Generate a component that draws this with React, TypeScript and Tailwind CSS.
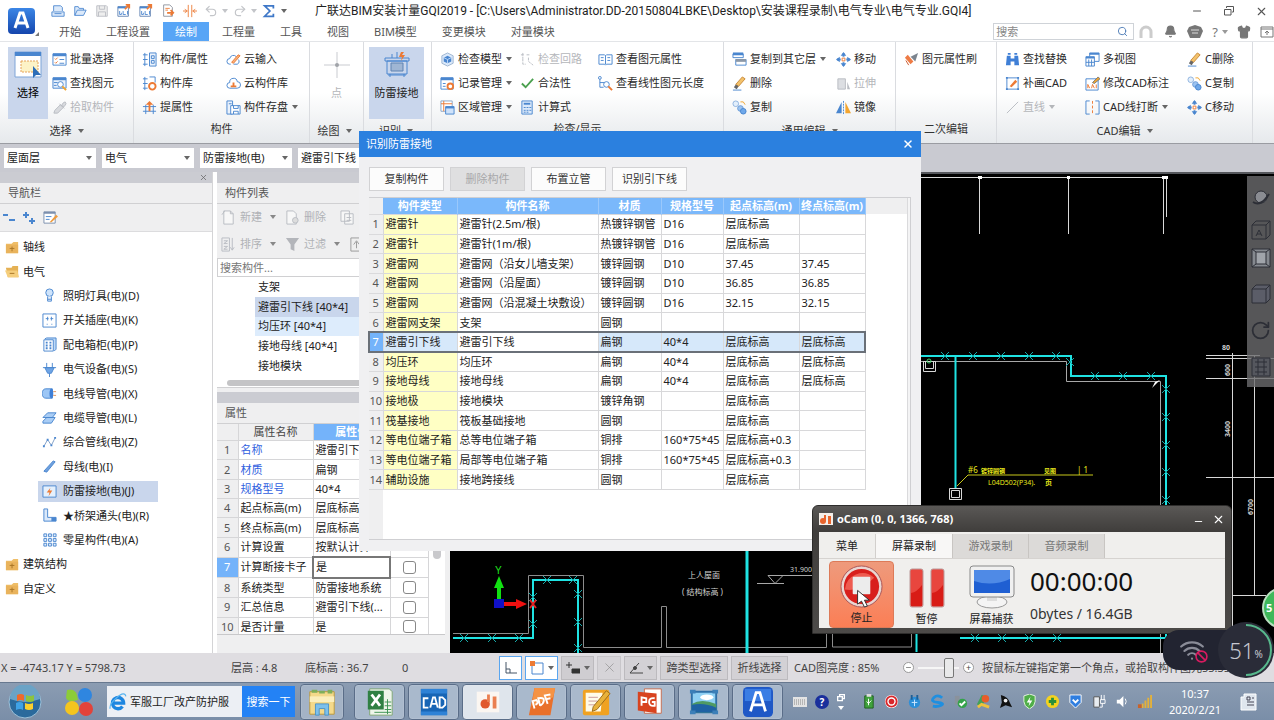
import { type ReactNode } from "react";
import { Bell, Search, Shirt, X, Minus, Undo2, Redo2, RotateCw, Wifi, Ban } from "lucide-react";

const FONT = "font-['Noto_Sans','Noto_Sans_CJK_SC',sans-serif]";

const B = "#4a86cf";
const O = "#ec7a35";
const G = "#b9bcc2";

const icons: Record<string, ReactNode> = {
    save: <><path d="M3 8V2h8l2 2v4M1 9h14v5H1z" stroke={B} fill="#dbe9fa" /><path d="M4 11h8" stroke={B} /></>,
    open: <path d="M2 13V3h4l1 2h5v2M2 13l3-6h10l-3 6z" stroke={B} fill="#dbe9fa" />,
    disk: <><path d="M2 2h11l1 1v11H2z" stroke={G} fill="#eee" /><path d="M5 2v4h6V2M4 14V9h8v5" stroke={G} /></>,
    export: <><path d="M1 3h12v11H1z" stroke="#5c7fb0" fill="#fff" /><path d="M1 4h9" stroke={B} strokeWidth="2" /><path d="M3 8v4h2v-2M7 8v4h3M12 8v4" stroke={B} /><path d="M9 6l5-5m-4 0h4v4" stroke={O} strokeWidth="2" /></>,
    doc: <><path d="M3 1h7l3 3v10H3z" stroke="#8a8f99" fill="#fff" /><path d="M5 5h5M5 7h3" stroke={O} /><path d="M7 10h7m-3-3 3 3-3 3" stroke={O} strokeWidth="2" /></>,
    cmp: <path d="M6 1v14M10 1v14M0 8h4M2 6l3 2-3 2M16 8h-4m2-2-3 2 3 2" stroke={O} />,
    sum: <path d="M13 5V2H3l6 6-6 6h10v-3" stroke="#3f78c8" strokeWidth="2" />,
    listCheck: <><path d="M1 2h14v12H1z" stroke={B} fill="#fff" /><path d="M1 3h14" stroke={B} strokeWidth="3" /><path d="M3 7l1 1 2-2M3 11l1 1 2-2" stroke={O} /><path d="M8 8h5M8 12h5" stroke={B} /></>,
    find: <><path d="M1 2h14v11H1z" stroke={B} fill="#eaf2fc" /><path d="M1 3h14" stroke={B} strokeWidth="3" /><path d="M2 7h4M2 10h3" stroke={B} /><circle cx="9" cy="9" r="3" stroke={B} fill="#fff" /><path d="M11 11l4 4" stroke="#f0a52f" strokeWidth="2" /></>,
    pick: <path d="M2 14l1-3 6-6 3 3-6 6zM8 4l5 5M10 6l2-3 2-1 1 2-2 3z" stroke={G} fill="#d8dade" />,
    attr: <><path d="M1 3h5M1 8h5M1 13h5M3 1v14" stroke={B} /><path d="M8 1h7v14H8z" stroke={B} fill="#eaf2fc" /><path d="M10 4h3v3h-3zM10 9h3v3h-3z" stroke={B} /></>,
    lib: <><path d="M1 3h5M1 8h5M1 13h5M3 1v14M8 1h6v6" stroke={B} /><circle cx="11" cy="11" r="3.5" stroke={O} fill="#fff" strokeWidth="2" /></>,
    lift: <><path d="M1 7h14M4 5v10M12 5v10M1 12h14" stroke={B} /><path d="M8 12V4" stroke={O} strokeWidth="2" /><path d="M4 5l4-4 4 4z" fill={O} /></>,
    cloudPen: <><path d="M5 13H4a3 3 0 010-6 4 4 0 017-2M13 8a3 3 0 01-1 5H8" stroke={B} /><path d="M6 11l7-8 2 1-7 8z" stroke={O} fill="#f6b27c" /></>,
    cloudUp: <><path d="M4 13a3 3 0 010-6 4 4 0 018-1 3.500 3.500 0 010 7z" stroke={B} fill="#fff" /><path d="M5 11h6M8 11V7" stroke={O} strokeWidth="2" /></>,
    copySave: <><path d="M1 1h6v14H1zM3 4h3" stroke={B} fill="#eaf2fc" /><path d="M5 6h10v9H5z" stroke={B} fill="#fff" /><path d="M8 6v3h5V6M8 15v-3h5v3" stroke={B} /></>,
    cube: <><path d="M8 1l6 3v8l-6 3-6-3V4z" stroke="#9db3cf" fill="#dbe9fa" /><path d="M8 4l4 2v4l-4 2-4-2V6z" fill={B} /><path d="M4 6l4 2 4-2M8 8v4" stroke="#bcd6f7" /></>,
    gearDoc: <><path d="M1 2h13v12H1z" stroke={B} fill="#fff" /><path d="M1 3h13" stroke={B} strokeWidth="3" /><path d="M3 8h3M3 11h3" stroke={B} /><circle cx="11" cy="11" r="3" stroke={O} strokeWidth="2" fill="#fff" /></>,
    area: <><path d="M1 1h12v11H1z" stroke="#8aa6c9" fill="#fff" /><path d="M1 4h12M4 1v11" stroke={O} /><path d="M6 7h9v8H6z" stroke={B} fill="#cfe2fa" /><path d="M6 8h9" stroke={B} strokeWidth="2" /></>,
    circuit: <path d="M1 3h4M3 1v6M7 3h4M3 7v6h3M9 6v4l5 4" stroke={G} strokeDasharray="3 1" />,
    check: <path d="M2 8l4 4 8-9" stroke="#4ba04f" strokeWidth="2" />,
    calc: <><path d="M2 1h11v14H2z" stroke={B} fill="#dbe9fa" /><path d="M4 4h7" stroke={B} strokeWidth="2" /><path d="M4 8h2M7 8h2M10 8h2M4 11h2M7 11h2M10 11h2M4 13h2M7 13h2" stroke={B} /></>,
    book: <><path d="M1 3h6l1 1 1-1h6v10H9l-1 1-1-1H1z" stroke={B} fill="#fff" /><path d="M8 4v9M3 6h3M3 9h3M10 6h3M10 9h3" stroke={B} /></>,
    lineFind: <><path d="M2 2v10h4M2 7h6" stroke={B} /><circle cx="2" cy="2" r="1.500" fill="#fff" stroke={B} /><circle cx="9" cy="9" r="3" stroke={B} fill="#fff" /><path d="M11 11l4 4" stroke={O} strokeWidth="2" /></>,
    layers: <><path d="M1 2h11v4H1zM4 8h11v6H4z" stroke={B} fill="#fff" /><path d="M1 2h11" stroke={B} strokeWidth="3" /><path d="M4 9h11" stroke="#8b98a8" strokeWidth="3" /></>,
    eraser: <><path d="M4 9l7-8 3 2-7 8z" stroke="#c98a3a" fill="#f3c26b" /><path d="M2 12l2-3 3 2-2 3z" fill="#666" /><path d="M1 15h9" stroke={B} /></>,
    copy: <><circle cx="4" cy="4" r="3" stroke="#8fb3df" fill="#e3effc" /><path d="M9 2h3l2 3" stroke="#f0a52f" /><circle cx="9" cy="9" r="3" fill="#9cc3f1" stroke="#6a9bd6" /><circle cx="12" cy="12" r="3" fill="#6fa8ea" stroke={B} /></>,
    move: <><path d="M8 1v4M8 15v-4M1 8h4M15 8h-4" stroke={B} strokeWidth="2" /><path d="M8 0L5 4h6zM8 16l-3-4h6zM0 8l4-3v6zM16 8l-4-3v6z" fill={B} /><path d="M6.500 6.500h3v3h-3z" stroke={O} fill="#fff" /></>,
    stretch: <><path d="M2 3h8v11H2z" stroke={G} fill="#dcdee2" /><path d="M12 6l3 8h-3z" fill={G} /></>,
    mirror: <><path d="M6 2v12H0z" fill={B} /><path d="M8 1v14" stroke={B} strokeDasharray="2 1" /><path d="M10 2v12h6z" fill="#f3a52f" /></>,
    brush: <><path d="M1 6l6 7 3-3-6-7z" fill="#ee7b45" /><path d="M7 5l5 5 3-9z" fill="#7b848f" /><path d="M2 9l3 5" stroke="#c9562a" /></>,
    binoc: <path d="M2 4h4v3h4V4h4l1 10h-5v-4H6v4H1zM3 1h3v2H3zM10 1h3v2h-3z" fill="#3f7fd6" />,
    drawCad: <><path d="M2 2h12v12H2z" stroke={B} fill="#fff" /><path d="M1 1h2v2H1zM13 1h2v2h-2zM1 13h2v2H1zM13 13h2v2h-2z" fill={B} /><path d="M5 11l6-7 2 2-6 6z" fill={O} /></>,
    line: <path d="M2 14L14 2" stroke={G} />,
    views: <><path d="M5 1h10v9H5z" stroke={B} fill="#fff" /><path d="M1 5h9v10H1z" stroke={B} fill="#fff" /><path d="M1 6h9M5 2h10" stroke={B} strokeWidth="2" /><path d="M4 8v7M7 8v7M1 11h9" stroke={B} /></>,
    editCad: <><path d="M1 3h13v12H1z" stroke={B} fill="#fff" /><path d="M3 13V9l2 4m2 0l1-4 2 4m2-4v4" stroke={O} /><path d="M8 7l6-6 2 2-6 5z" fill="#f0a52f" stroke="#777" /></>,
    cut: <><path d="M5 1H1v14h4M11 1h4v14h-4" stroke={B} /><path d="M8 1v14" stroke={O} strokeDasharray="3 2" /></>,
    bulb: <><circle cx="8" cy="5" r="4" stroke={B} fill="#cfe4fb" /><path d="M6 9v5h4V9M6 12h4" stroke={B} fill="#eaf2fc" /></>,
    socket: <><path d="M1 1h14v14H1z" stroke={B} fill="#fff" /><path d="M4 6h3M9 6h3M6 4v4M10 4v4M5 12h1M10 12h1" stroke={B} /></>,
    box: <><path d="M3 2l2-1h10v12l-2 2" stroke={B} fill="#bcd8f7" /><path d="M2 3h10v12H2z" stroke={B} fill="#fff" /><path d="M4 6h2M8 6h2M4 9h2M8 9h2M4 12h2M8 12h2" stroke={B} strokeWidth="2" /></>,
    plug: <><path d="M3 6h10l-3 6H6z" fill="#6fa4e4" stroke={B} /><path d="M5 1v5M11 1v5M8 12v4M1 6h14" stroke={B} /></>,
    pipe: <><path d="M4 3h7v10H4a4 5 0 010-10z" fill="#9cc6f5" stroke={B} /><ellipse cx="10" cy="8" rx="2" ry="5" fill="#3f7fd6" /><path d="M12 6h3M12 10h3" stroke="#e0925a" /></>,
    cable: <><path d="M1 8l5-5h9l-4 5zM1 12l4-4h9l-4 6H1z" fill="#a9cdf5" stroke={B} /></>,
    poly: <><path d="M2 12l4-7 4 6 4-8" stroke="#7c9cc5" /><path d="M1 11h2v2H1zM5 4h2v2H5zM9 10h2v2H9zM13 2h2v2h-2z" fill={B} /></>,
    bar: <path d="M2 13L12 2l2 1L5 14z" fill="#6fa0de" stroke={B} />,
    bolt: <><path d="M1 2h14v12H1z" stroke={B} fill="#e4f0fd" /><path d="M9 4L5 9h3l-1 4 4-6H8z" fill={O} /></>,
    elbow: <><path d="M2 1h4v9h9v4H2z" fill="#dbe9fa" stroke={B} /><path d="M10 10h5v4h-5z" fill={B} /></>,
    dots: <path d="M2 2h3v3H2zM7 2h3v3H7zM12 2h3v3h-3zM2 7h3v3H2zM7 7h3v3H7zM12 7h3v3h-3zM2 12h3v3H2zM7 12h3v3H7zM12 12h3v3h-3z" stroke={B} fill="#e4f0fd" />,
    folder: <><path d="M1 4h6l2-2h5v12H1z" fill="#efbe68" /><path d="M1 5h13v9H1z" fill="#e9b35c" /><path d="M5 9h5M7.500 7v5" stroke="#a87426" /></>,
    folderOpen: <><path d="M1 4h6l1-2h6v12H3z" fill="#e5b154" /><path d="M0 7h13l2 7H3z" fill="#f5ce7c" /><path d="M5 10h5" stroke="#a87426" /></>,
    page: <path d="M3 1h7l3 3v11H3zM10 1v3h3M1 5l3-4" stroke={G} fill="#f7f7f7" />,
    pageDel: <><path d="M2 1h7l3 3v11H2z" stroke={G} fill="#f7f7f7" /><circle cx="11" cy="11" r="3" stroke={G} fill="#ddd" /></>,
    pages: <path d="M1 1h9v11H1zM5 4h9v11H5zM7 8h5M7 11h5" stroke={G} fill="#f7f7f7" />,
    sort: <path d="M1 1h8v14H1zM3 4h4l-4 3h4M3 10h4l-4 3h4M12 1v13m-2-3 2 3 2-3" stroke={G} fill="none" />,
    funnel: <path d="M1 1h14l-5 7v7l-4-2V8z" fill="#b3b5ba" />,
    up: <path d="M2 1h12v14H2zM8 12V5m-3 3 3-4 3 4" stroke="#999" fill="#eee" />,
    edit: <><path d="M1 2h12v12H1z" stroke="#7b8fae" fill="#fff" /><path d="M1 3h12" stroke="#7b8fae" strokeWidth="2" /><path d="M3 7h6M3 10h4" stroke={B} /><path d="M7 13l7-8 2 2-7 6z" fill="#ef9b3c" /></>,
};

function Icon({ name, className = "size-4" }: { name: string; className?: string }) {
    return <svg viewBox="0 0 16 16" fill="none" className={`${className} shrink-0`} aria-hidden="true">{icons[name]}</svg>;
}

function Caret({ className = "text-[#666]" }: { className?: string }) {
    return <svg viewBox="0 0 6 4" className={`h-1 w-[6px] shrink-0 ${className}`} aria-hidden="true"><path d="M0 0h6L3 4z" fill="currentColor" /></svg>;
}

function RibbonItem({ icon, label, caret, off }: { icon: string; label: string; caret?: boolean; off?: boolean }) {
    return <button disabled={off} className={`flex h-6 items-center gap-[3px] whitespace-nowrap ${off ? "text-[#b4b6ba]" : "text-[#2a2a2a]"}`}>
        <Icon name={icon} className="size-[15px]" />
        <span>{label}</span>
        {caret && <span className="ml-px"><Caret className={off ? "text-[#b4b6ba]" : "text-[#666]"} /></span>}
    </button>;
}

function Group({ label, caret, className, children }: { label: string; caret?: boolean; className: string; children: ReactNode }) {
    return <div className={`flex shrink-0 flex-col border-r border-[#dadce0] pt-[5px] ${className}`}>
        <div className="flex h-[72px]">{children}</div>
        <div className={`flex items-center justify-center gap-[6px] pr-2 text-[#333] ${caret ? "h-6" : "h-5"}`}>
            {label}
            {caret && <Caret />}
        </div>
    </div>;
}

function TitleBar() {
    const quick = ["save", "open", "disk", "export", "export", "doc", "cmp"];
    const tabs = ["开始", "工程设置", "绘制", "工程量", "工具", "视图", "BIM模型", "变更模块", "对量模块"];

    return <header className="flex h-[42px] shrink-0 border-b border-[#e3e5e8] bg-white">
        <div className="flex w-[47px] shrink-0 items-center pl-2">
            <svg viewBox="0 0 32 30" className="h-[30px] w-8" aria-label="GQI">
                <defs><linearGradient id="logo" x1="0" y1="0" x2="0" y2="1"><stop stopColor="#3b86e6" /><stop offset="1" stopColor="#1546ad" /></linearGradient></defs>
                <rect x="0" y="2" width="27" height="26" rx="4" fill="url(#logo)" />
                <path d="M7 22L12 7h3l5 15M9 17h9" stroke="#fff" strokeWidth="3" fill="none" />
                <path d="M31 26v4h-4z" fill="#777" />
            </svg>
        </div>
        <div className="flex min-w-0 flex-1 flex-col">
            <div className="flex h-[22px] items-center">
                <div className="flex items-center gap-[5px] pl-[3px]">
                    {quick.map((q, i) => <button key={i} className="flex pr-px" aria-label={q}><Icon name={q} className="h-[14px] w-4" /></button>)}
                    <button aria-label="undo" className="flex items-center gap-1 text-[#c3c5c9]"><Undo2 size={14} /><Caret className="text-[#c3c5c9]" /></button>
                    <button aria-label="redo" className="flex items-center gap-1 text-[#c3c5c9]"><Redo2 size={14} /><Caret className="text-[#c3c5c9]" /></button>
                    <button className="flex" aria-label="sum"><Icon name="sum" className="size-[14px]" /></button>
                    <Caret />
                </div>
                <h1 className="flex-1 truncate pl-7 font-['Roboto','Noto_Sans_CJK_SC',sans-serif] text-[12px] leading-4 text-[#222]">广联达BIM安装计量GQI2019 - [C:\Users\Administrator.DD-20150804LBKE\Desktop\安装课程录制\电气专业\电气专业.GQI4]</h1>
                <div className="flex items-center gap-5 pr-[6px] text-[#555]">
                    <button aria-label="minimize"><Minus size={12} /></button>
                    <button aria-label="restore"><svg viewBox="0 0 12 12" className="size-3" fill="none" stroke="currentColor"><path d="M3.500 3V1.500h7V7H9M1.500 4.500H8V10H1.500z" /></svg></button>
                    <button aria-label="close"><X size={13} /></button>
                </div>
            </div>
            <div className="flex h-[19px] items-center">
                <nav className="flex flex-1 gap-px">
                    {tabs.map((t) => <button key={t} className={t === "绘制" ? "h-[19px] bg-[#58a5f6] px-3 text-white" : "h-[19px] px-3 text-[#555]"}>{t}</button>)}
                </nav>
                <label className="flex h-[17px] w-[141px] items-center border border-[#cfd3d8] px-[2px]">
                    <input placeholder="搜索" aria-label="搜索" className="w-full min-w-0 flex-1 outline-none placeholder:text-[#888]" />
                    <Search size={11} className="mr-[3px] text-[#4a7ab5]" />
                </label>
                <div className="flex items-center gap-[9px] pl-1 text-[#777]">
                    <svg viewBox="0 0 16 16" className="size-4" fill="none" stroke="#ccc" strokeWidth="3"><path d="M3 14V8a5 5 0 0110 0v6" /></svg>
                    <Bell size={13} fill="currentColor" className="mx-px" />
                    <svg viewBox="0 0 16 16" className="size-4" fill="#777"><path d="M8 1l6 2 2 4-3 7H3L0 7l2-4z" /><path d="M4 6h8M5 9h6" stroke="#ddd" /></svg>
                    <span className="flex items-center gap-1 text-[13px]">?<Caret className="text-[#999]" /></span>
                    <Shirt size={14} fill="currentColor" />
                    <svg viewBox="0 0 14 14" className="size-[14px]" fill="none" stroke="#777"><path d="M1 2h12v10H1zM1 4h12M7 10V6M5 8l2-2 2 2" /></svg>
                </div>
            </div>
        </div>
    </header>;
}

function Ribbon() {
    return <div className="flex h-[102px] shrink-0 border-b border-[#9a9ca2] bg-gradient-to-b from-white from-50% to-[#e6e9ec]">
        <Group label="选择" caret className="w-[134px] pl-2">
            <button className="flex w-10 flex-col items-center gap-[6px] bg-[#c9d6ec] pt-1">
                <svg viewBox="0 0 28 28" className="size-7" fill="none"><path d="M1 1h26v25H1z" fill="#fff" stroke="#7ea5d8" /><path d="M1 1h26v4H1z" fill={B} /><path d="M7 10h17v11H7z" fill="#fdf3c7" stroke="#e6a35a" strokeDasharray="2 1" /><path d="M19 15v12l3-3h5z" fill="#2f6fb8" /></svg>
                选择
            </button>
            <div className="pl-1">
                <RibbonItem icon="listCheck" label="批量选择" />
                <RibbonItem icon="find" label="查找图元" />
                <RibbonItem icon="pick" label="拾取构件" off />
            </div>
        </Group>
        <Group label="构件" className="w-[176px] pl-2">
            <div className="w-[84px]">
                <RibbonItem icon="attr" label="构件/属性" />
                <RibbonItem icon="lib" label="构件库" />
                <RibbonItem icon="lift" label="提属性" />
            </div>
            <div>
                <RibbonItem icon="cloudPen" label="云输入" />
                <RibbonItem icon="cloudUp" label="云构件库" />
                <RibbonItem icon="copySave" label="构件存盘" caret />
            </div>
        </Group>
        <Group label="绘图" caret className="w-[54px] pl-1">
            <button disabled className="flex w-full flex-col items-center gap-[6px] pt-1 pr-1 text-[#b4b6ba]">
                <svg viewBox="0 0 28 28" className="size-7"><path d="M14 1v26M1 14h26" stroke="#c9cbd0" /><circle cx="14" cy="14" r="2" fill="#a0a3a8" /></svg>
                点
            </button>
        </Group>
        <Group label="识别" caret className="w-[68px] pl-[5px]">
            <button className="flex w-[55px] flex-col items-center gap-[6px] bg-[#c9d6ec] pt-1 text-[#222]">
                <svg viewBox="0 0 28 28" className="size-7" fill="none"><path d="M2 7h24v3H2zM4 10h20v13H4zM7 23v3M21 23v3M9 7V3M14 7V1M5 24h18" stroke={B} /><path d="M8 12h12v8H8z" fill="#9fb6d4" stroke="#5f83b2" /><path d="M18 1l-2 5h3l-1 4 4-6h-3l2-3z" fill={O} /></svg>
                防雷接地
            </button>
        </Group>
        <Group label="检查/显示" className="w-[292px] pl-2">
            <div className="w-20">
                <RibbonItem icon="cube" label="检查模型" caret />
                <RibbonItem icon="gearDoc" label="记录管理" caret />
                <RibbonItem icon="area" label="区域管理" caret />
            </div>
            <div className="w-[78px]">
                <RibbonItem icon="circuit" label="检查回路" off />
                <RibbonItem icon="check" label="合法性" />
                <RibbonItem icon="calc" label="计算式" />
            </div>
            <div>
                <RibbonItem icon="book" label="查看图元属性" />
                <RibbonItem icon="lineFind" label="查看线性图元长度" />
            </div>
        </Group>
        <Group label="通用编辑" caret className="w-[172px] pl-2">
            <div className="w-[104px]">
                <RibbonItem icon="layers" label="复制到其它层" caret />
                <RibbonItem icon="eraser" label="删除" />
                <RibbonItem icon="copy" label="复制" />
            </div>
            <div>
                <RibbonItem icon="move" label="移动" />
                <RibbonItem icon="stretch" label="拉伸" off />
                <RibbonItem icon="mirror" label="镜像" />
            </div>
        </Group>
        <Group label="二次编辑" className="w-[101px] pl-2">
            <RibbonItem icon="brush" label="图元属性刷" />
        </Group>
        <Group label="CAD编辑" caret className="w-[256px] pl-2">
            <div className="w-20">
                <RibbonItem icon="binoc" label="查找替换" />
                <RibbonItem icon="drawCad" label="补画CAD" />
                <RibbonItem icon="line" label="直线" caret off />
            </div>
            <div className="w-[102px]">
                <RibbonItem icon="views" label="多视图" />
                <RibbonItem icon="editCad" label="修改CAD标注" />
                <RibbonItem icon="cut" label="CAD线打断" caret />
            </div>
            <div>
                <RibbonItem icon="eraser" label="C删除" />
                <RibbonItem icon="copy" label="C复制" />
                <RibbonItem icon="move" label="C移动" />
            </div>
        </Group>
    </div>;
}

function ContextBar() {
    const picks = ["屋面层", "电气", "防雷接地(电)", "避雷引下线"];

    return <div className="flex h-7 shrink-0 items-center gap-[6px] bg-[#c9cad1] px-1">
        {picks.map((p) => <label key={p} className="relative flex w-[92px] items-center">
            <select aria-label={p} className="h-5 w-full appearance-none bg-white px-[3px] text-[#222]">
                <option>{p}</option>
            </select>
            <span className="pointer-events-none absolute right-1"><Caret /></span>
        </label>)}
    </div>;
}

function PanelTitle({ children, close }: { children: ReactNode; close?: boolean }) {
    return <>
        <div className="flex h-[11px] shrink-0 items-center justify-end bg-[#cbccd2] pr-1 text-[#666]">
            {close && <button aria-label="关闭"><X size={9} /></button>}
        </div>
        <h2 className="flex h-[21px] shrink-0 items-center border-b border-[#d0d0d2] bg-[#efeff0] pl-2 text-[#555]">{children}</h2>
    </>;
}

const navItems = [
    ["bulb", "照明灯具(电)(D)"],
    ["socket", "开关插座(电)(K)"],
    ["box", "配电箱柜(电)(P)"],
    ["plug", "电气设备(电)(S)"],
    ["pipe", "电线导管(电)(X)"],
    ["cable", "电缆导管(电)(L)"],
    ["poly", "综合管线(电)(Z)"],
    ["bar", "母线(电)(I)"],
    ["bolt", "防雷接地(电)(J)"],
    ["elbow", "★桥架通头(电)(R)"],
    ["dots", "零星构件(电)(A)"],
];

function FolderRow({ open, label }: { open?: boolean; label: string }) {
    return <li className="flex items-center pl-[5px]">
        <button className="flex items-center gap-[3px]"><Icon name={open ? "folderOpen" : "folder"} className="size-[15px]" />{label}</button>
    </li>;
}

function Navigator() {
    return <aside className="flex w-[213px] shrink-0 flex-col border-r border-[#d4d4d6] bg-white">
        <PanelTitle close>导航栏</PanelTitle>
        <div className="flex h-[28px] shrink-0 items-center gap-2 border-b border-[#dcdcde] bg-[#efeff0] pl-[3px]">
            <svg viewBox="0 0 12 12" className="size-3" stroke={B} strokeWidth="2"><path d="M0 3h5M6 8h6" /></svg>
            <svg viewBox="0 0 12 12" className="size-3" stroke={B} strokeWidth="2"><path d="M0 3h6M3 0v6M6 9h6M9 6v6" /></svg>
            <Icon name="edit" className="size-[15px]" />
        </div>
        <ul className="mt-[3px] grid h-[366px] auto-rows-fr text-[#222]">
            <FolderRow label="轴线" />
            <FolderRow label="电气" open />
            {navItems.map(([icon, label]) => <li key={label} className="flex items-center pl-[38px]">
                <button className={`flex h-[21px] w-[120px] items-center gap-[6px] pl-1 ${icon === "bolt" ? "bg-[#c9d6ec]" : ""}`}>
                    <Icon name={icon} className="size-[15px]" />{label}
                </button>
            </li>)}
            <FolderRow label="建筑结构" />
            <FolderRow label="自定义" />
        </ul>
    </aside>;
}

function ToolText({ icon, label, caret }: { icon: string; label: string; caret?: boolean }) {
    return <button disabled className={`flex shrink-0 items-center gap-1 text-[#b0b2b6] ${caret ? "w-16" : "w-[55px]"}`}>
        <Icon name={icon} className="size-[15px]" />{label}
        {caret && <span className="ml-1"><Caret className="text-[#888]" /></span>}
    </button>;
}

const props = [
    ["名称", "避雷引下线"],
    ["材质", "扁钢"],
    ["规格型号", "40*4"],
    ["起点标高(m)", "层底标高"],
    ["终点标高(m)", "层底标高"],
    ["计算设置", "按默认计算..."],
    ["计算断接卡子", "是"],
    ["系统类型", "防雷接地系统"],
    ["汇总信息", "避雷引下线(..."],
    ["是否计量", "是"],
];

function ComponentPanel() {
    const list = ["支架", "避雷引下线 [40*4]", "均压环 [40*4]", "接地母线 [40*4]", "接地模块"];

    return <aside className="ml-1 flex w-[233px] shrink-0 flex-col bg-[#efeff0]">
        <PanelTitle>构件列表</PanelTitle>
        <div className="flex h-[26px] shrink-0 items-center pl-1">
            <ToolText icon="page" label="新建" caret />
            <ToolText icon="pageDel" label="删除" />
            <Icon name="pages" className="size-[15px]" />
        </div>
        <div className="flex h-7 shrink-0 items-center pl-1">
            <ToolText icon="sort" label="排序" caret />
            <ToolText icon="funnel" label="过滤" caret />
            <Icon name="up" className="size-[15px]" />
        </div>
        <input placeholder="搜索构件..." aria-label="搜索构件" className="h-[19px] w-[228px] shrink-0 border border-[#d0d0d2] bg-white px-[2px] outline-none placeholder:text-[#777]" />
        <div className="flex h-[111px] w-[228px] shrink-0 flex-col border-b border-[#d0d0d2] bg-white">
            <ul className="grid h-[99px] auto-rows-fr pl-[38px] text-[#222]">
                {list.map((l, i) => <li key={l} className={`flex items-center pl-[3px] ${i === 1 ? "bg-[#c9d6ec]" : i === 2 ? "bg-[#ddecfc]" : ""}`}>{l}</li>)}
            </ul>
            <div className="mt-1 ml-[10px] h-[6px] rounded-full bg-[#c4c4c6]" />
        </div>
        <div className="mt-1 flex w-[228px] shrink-0 flex-col">
            <PanelTitle>属性</PanelTitle>
            <div className="flex h-[211px] overflow-hidden border-b border-[#c8c8ca] bg-white">
                <table className="h-[213px] w-[212px] shrink-0 table-fixed border-collapse text-[#222]">
                    <colgroup><col className="w-[21px]" /><col className="w-[75px]" /><col className="w-[77px]" /><col /></colgroup>
                    <thead>
                        <tr className="h-4 bg-[#efeff0] font-normal leading-4 text-[#444]">
                            <th className="border-r border-[#d6d6d8]"></th>
                            <th className="border-r border-[#d6d6d8] font-normal">属性名称</th>
                            <th className="bg-[#74b3fa] font-bold text-white">属性值</th>
                            <th></th>
                        </tr>
                    </thead>
                    <tbody>
                        {props.map(([k, v], i) => <tr key={k} className="leading-4">
                            <td className={`border border-l-0 border-[#d6d6d8] text-center ${i === 6 ? "bg-[#74b3fa] text-white" : "bg-[#efeff0] text-[#555]"}`}>{i + 1}</td>
                            <td className={`border border-[#d6d6d8] pl-[2px] whitespace-nowrap ${i < 3 ? "text-[#2f5fe0]" : ""}`}>{k}</td>
                            <td className={`pl-[2px] whitespace-nowrap ${i === 6 ? "border-2 border-[#777]" : "border border-[#d6d6d8]"}`}>{v}</td>
                            <td className="border border-[#d6d6d8] align-middle">
                                {i !== 5 && <input type="checkbox" aria-label={k} className="mx-auto block size-[13px] appearance-none rounded-[3px] border border-[#888] bg-white" />}
                            </td>
                        </tr>)}
                    </tbody>
                </table>
                <div className="mx-1 mt-[90px] h-[45px] w-2 rounded-full bg-[#c9c9cc]" />
            </div>
        </div>
    </aside>;
}

const crosses = [
    [945, 356], [973, 356], [1001, 356], [1029, 356], [1056, 356], [1070, 362],
    [1095, 376], [1123, 376], [1151, 376],
    [1166, 389], [1166, 417], [1166, 445], [1166, 472], [1166, 500],
    [464, 638], [492, 638], [519, 638], [533, 597], [533, 624], [547, 580], [573, 580], [578, 594], [578, 622], [578, 648],
    [975, 638], [1002, 638], [1029, 638], [1057, 638],
];

function Drawing() {
    return <main className="relative min-w-0 flex-1 overflow-hidden border-t-2 border-[#55575c] bg-black">
        <svg viewBox="450 174 824 479" preserveAspectRatio="xMinYMin slice" className="size-full" fill="none">
            <g stroke="#d8d8d8">
                <path d="M451 177.500h717M979.500 177v57M1068.500 177v57M1163.500 177v57M1166.500 177v40" />
                <path d="M921 361.500h145.500v20h94v280" stroke="#a8a8a8" />
                <path d="M1206 355.500h54M1206 358.500h68M1206 378.500h68M1206 477.500h68M1232.500 353v280M1254.500 356v239M1232 595.500h34" />
                <path d="M453 633.500h75.500v-58h55v72h78v-41h5v41h160v-60M832.500 600v47h79v-40" stroke="#8c8c8c" />
                <path d="M757 583.500h27M768 575.500h44M768 575.500l7 8 8-8" stroke="#a8a8a8" />
                <path d="M923.500 361.500h12v10h-12zM925.500 361.500v7h8v-7M949.500 488.500h12v11h-12zM951.500 490.500h8v7h-8z" />
            </g>
            <path d="M978 176h4v3h-4zM1067 176h3v3h-3zM1162 176h6v3h-6zM1152 388l3-6 5-2z" fill="#fff" />
            <g stroke="#1fe3e3" strokeWidth="2">
                <path d="M921 356h150v20h95v262H960M955.500 356v132M453 638h80v-58h45v73M916.500 630v22" />
                <path d="M747 540v113" strokeWidth="3" />
            </g>
            <g stroke="#17a9a9">
                {crosses.map(([x, y]) => <path key={`${x}-${y}`} d={`M${x - 4} ${y - 4}l8 8m0-8l-8 8`} />)}
            </g>
            <circle cx="929" cy="361" r="2" stroke="#3fd06a" />
            <path d="M957 486l11-11h125" stroke="#c8c81a" />
            <g fill="#e8e81c" fontSize="8" fontFamily="Noto Sans, Noto Sans CJK SC, sans-serif">
                <text x="968" y="473">#6</text>
                <text x="981" y="473" fontSize="6" fontWeight="bold">镀锌圆钢</text>
                <text x="1044" y="473" fontSize="6" fontWeight="bold">见图</text>
                <text x="1077" y="473">| 1</text>
                <text x="988" y="485" fontSize="7">L04D502(P34).</text>
                <text x="1045" y="485" fontSize="7" fontWeight="bold">页</text>
            </g>
            <g fill="#d0d0d0" fontFamily="Noto Sans, Noto Sans CJK SC, sans-serif">
                <text x="688" y="578" fontSize="8">上人屋面</text>
                <text x="682" y="595" fontSize="8">( 结构标高 )</text>
                <text x="790" y="572" fontSize="7">31.900</text>
                <text x="1230" y="437" fontSize="7" fontWeight="bold" transform="rotate(-90 1230 437)">3400</text>
                <text x="1230" y="376" fontSize="7" fontWeight="bold" transform="rotate(-90 1230 376)">600</text>
                <text x="1222" y="350" fontSize="7" fontWeight="bold">80</text>
                <text x="1253" y="515" fontSize="7" fontWeight="bold" transform="rotate(-90 1253 515)">6700</text>
            </g>
            <text x="495" y="574" fontSize="10" fill="#1fe01f" fontFamily="Liberation Sans">Y</text>
            <path d="M499 602v-16" stroke="#12e012" strokeWidth="4" />
            <path d="M494 588l5-12 5 12z" fill="#12e012" />
            <path d="M504 604h14" stroke="#f01010" strokeWidth="4" />
            <path d="M516 599l11 5-11 5z" fill="#f01010" />
            <path d="M530 600l6 8m0-8l-6 8" stroke="#e02020" strokeWidth="2" />
            <path d="M494 599h10v9h-10z" fill="#1010c8" />
        </svg>
        <div className="absolute top-[2px] right-0 flex h-[211px] w-[27px] flex-col items-center gap-3 bg-[#6b6b6e]/80 pt-3 text-[#2c2e36]">
            <svg viewBox="0 0 20 20" className="size-5" fill="none" stroke="currentColor"><circle cx="10" cy="9" r="6" fill="#8a8c92" /><path d="M2 14q8 5 16-8" strokeWidth="2" /></svg>
            <svg viewBox="0 0 20 20" className="size-5" fill="none" stroke="currentColor"><path d="M1 5h14v14H1zM1 5l4-4h14v14l-4 4M15 5l4-4" /><path d="M5 16l3-6 3 6M6 14h4" /></svg>
            <svg viewBox="0 0 20 20" className="-mt-1 size-5" fill="none" stroke="currentColor"><path d="M1 1h18v18H1z" fill="#85898f" /><path d="M5 4h10v12H5zM1 1l4 3M19 1l-4 3M1 19l4-3M19 19l-4-3" fill="#a0a4aa" /></svg>
            <svg viewBox="0 0 20 20" className="mt-1 size-5" fill="none" stroke="currentColor"><path d="M1 5h14v14H1zM1 5l4-4h14v14l-4 4M15 5l4-4" fill="#5b5d68" /></svg>
            <RotateCw size={21} className="mt-1" />
            <svg viewBox="0 0 20 20" className="mt-1 size-5" stroke="currentColor"><path d="M1 1h18v18H1z" fill="#55575e" /><path d="M4 5h12M4 10h12M4 15h12M7 2v16M13 2v16" /></svg>
        </div>
    </main>;
}

const rows = [
    ["避雷针", "避雷针(2.5m/根)", "热镀锌钢管", "D16", "层底标高", ""],
    ["避雷针", "避雷针(1m/根)", "热镀锌钢管", "D16", "层底标高", ""],
    ["避雷网", "避雷网（沿女儿墙支架）", "镀锌圆钢", "D10", "37.45", "37.45"],
    ["避雷网", "避雷网（沿屋面）", "镀锌圆钢", "D10", "36.85", "36.85"],
    ["避雷网", "避雷网（沿混凝土块敷设）", "镀锌圆钢", "D16", "32.15", "32.15"],
    ["避雷网支架", "支架", "圆钢", "", "", ""],
    ["避雷引下线", "避雷引下线", "扁钢", "40*4", "层底标高", "层底标高"],
    ["均压环", "均压环", "扁钢", "40*4", "层底标高", "层底标高"],
    ["接地母线", "接地母线", "扁钢", "40*4", "层底标高", "层底标高"],
    ["接地极", "接地模块", "镀锌角钢", "", "层底标高", ""],
    ["筏基接地", "筏板基础接地", "圆钢", "", "层底标高", ""],
    ["等电位端子箱", "总等电位端子箱", "铜排", "160*75*45", "层底标高+0.3", ""],
    ["等电位端子箱", "局部等电位端子箱", "铜排", "160*75*45", "层底标高+0.3", ""],
    ["辅助设施", "接地跨接线", "圆钢", "", "层底标高", ""],
];

function IdentifyDialog() {
    const heads = ["构件类型", "构件名称", "材质", "规格型号", "起点标高(m)", "终点标高(m)"];
    const actions = ["复制构件", "删除构件", "布置立管", "识别引下线"];

    return <section role="dialog" aria-label="识别防雷接地" className="absolute top-[131px] left-[359px] flex h-[420px] w-[562px] flex-col bg-[#f0f0f2]">
        <header className="flex h-[26px] shrink-0 items-center justify-between bg-[#2b80df] px-[7px] text-white">
            识别防雷接地
            <button aria-label="关闭"><X size={12} strokeWidth={3} /></button>
        </header>
        <div className="flex shrink-0 gap-[6px] px-[10px] pt-[10px] pb-[6px]">
            {actions.map((a) => <button key={a} disabled={a === "删除构件"} className="h-6 w-[75px] border border-[#d2d2d4] bg-[#fcfcfc] text-[#333] disabled:bg-[#dfdfe0] disabled:text-[#a8a8aa]">{a}</button>)}
        </div>
        <div className="mx-[10px] mb-[11px] flex min-h-0 flex-1 border-y border-r border-[#cfcfd2] bg-white">
            <div className="w-[497px] bg-[linear-gradient(to_right,#efeff0_14px,white_14px)]">
                <table className="h-[292px] w-[496px] table-fixed border-collapse text-[#222]">
                    <colgroup>
                        <col className="w-[14px]" /><col className="w-[74px]" /><col className="w-[141px]" /><col className="w-[63px]" /><col className="w-[62px]" /><col className="w-[76px]" /><col className="w-[66px]" />
                    </colgroup>
                    <thead>
                        <tr className="h-4 leading-4">
                            <th className="bg-[#efeff0]"></th>
                            {heads.map((h) => <th key={h} className="border-r border-[#9ac8fb] bg-[#7ab8fb] font-bold whitespace-nowrap text-white">{h}</th>)}
                        </tr>
                    </thead>
                    <tbody>
                        {rows.map((r, i) => <tr key={i} className={i === 6 ? "bg-[#d6e8fa] leading-4 outline-2 -outline-offset-1 outline-[#6a7078]" : "leading-4"}>
                            <td className={`text-center ${i === 6 ? "bg-[#74b3fa] text-white" : "border-y border-[#dadadc] bg-[#efeff0] text-[#555]"}`}><span className="-mx-1">{i + 1}</span></td>
                            {r.map((c, j) => <td key={j} className={`border border-[#d8d8da] pl-[2px] whitespace-nowrap ${j === 0 && i !== 6 ? "bg-[#ffffc4]" : j === 1 ? "bg-white" : ""}`}>{c}</td>)}
                        </tr>)}
                    </tbody>
                </table>
            </div>
            <div className="h-4 flex-1 bg-[#efeff0]" />
            <div className="w-[3px] border-l border-[#dadadc] bg-[#f4f4f5]" />
        </div>
    </section>;
}

function Recorder() {
    const tabs = ["菜单", "屏幕录制", "游戏录制", "音频录制"];

    return <section aria-label="oCam" className="absolute top-[505px] left-[812px] flex h-[129px] w-[420px] flex-col rounded-t-md border border-[#2e2d2c] bg-gradient-to-b from-[#5a5856] via-[#403e3c] via-20% to-[#4c4a48] px-[6px] pb-[5px]">
        <header className="flex h-[26px] shrink-0 items-center gap-1 text-white">
            <svg viewBox="0 0 14 12" className="h-3 w-[14px]"><path d="M0 0h14v12H0z" fill="#f4eee8" /><circle cx="4" cy="8" r="3" fill="#e8642c" /><path d="M9 3h3v8H9zM5 2h2v6H5z" fill="#e8642c" /></svg>
            <h2 className="flex-1 font-bold">oCam (0, 0, 1366, 768)</h2>
            <button aria-label="minimize" className="mt-1"><Minus size={11} /></button>
            <button aria-label="close" className="ml-1"><X size={13} /></button>
        </header>
        <div className="flex min-h-0 flex-1 flex-col bg-[#f0efed]">
            <nav className="flex h-[27px] shrink-0 border-b border-[#d6d3d0] pt-[2px] text-[#222]">
                {tabs.map((t, i) => <button key={t} className={[
                    "w-[57px] border-r border-[#d2cfcc]",
                    "w-[76px] bg-[#f8f7f6]",
                    "w-[77px] border-x border-[#c8c5c2] bg-[#dcdad8] text-[#777]",
                    "w-[76px] border-r border-[#c8c5c2] bg-[#dcdad8] text-[#777]",
                ][i]}>{t}</button>)}
            </nav>
            <div className="flex flex-1 pt-[2px] pl-[10px] text-[#222]">
                <button className="flex h-[67px] w-[65px] flex-col items-center justify-between rounded-sm border border-[#dd7a58] bg-gradient-to-b from-[#ee9a7c] to-[#fb7e55] pt-[3px] pb-px">
                    <svg viewBox="0 0 44 44" className="size-[43px]"><circle cx="22" cy="22" r="21" fill="#e9d6d2" stroke="#a55" /><circle cx="22" cy="22" r="18" fill="#d81f1c" /><path d="M5 25q15 3 30-12A18 18 0 005 25z" fill="#ee5b50" /><rect x="13" y="12" width="18" height="18" rx="1" fill="#ececec" /><path d="M18 26v14l4-3 3 6 3-1-3-6h5z" fill="#fff" stroke="#333" /></svg>
                    停止
                </button>
                <button className="flex h-[67px] w-[65px] flex-col items-center justify-between pt-[7px] pb-px">
                    <svg viewBox="0 0 36 40" className="h-10 w-9"><rect x="1" y="1" width="13" height="38" rx="2" fill="#e8463e" stroke="#b99" /><rect x="22" y="1" width="13" height="38" rx="2" fill="#e8463e" stroke="#b99" /><path d="M2 25q6-1 11-8v21H2zM23 25q6-1 11-8v21H23z" fill="#d81c16" /></svg>
                    暂停
                </button>
                <button className="flex h-[67px] w-[65px] flex-col items-center justify-between pt-1 pb-px">
                    <svg viewBox="0 0 46 44" className="h-11 w-[46px]"><ellipse cx="23" cy="37" rx="15" ry="6" fill="#f4f4f4" stroke="#999" /><path d="M18 30h10v6H18z" fill="#ddd" /><rect x="1" y="1" width="44" height="31" rx="3" fill="#f0f0f0" stroke="#888" /><path d="M5 5h36v23H5z" fill="#1f5fd2" /><path d="M5 5h36v9Q23 22 5 16z" fill="#4f8ae6" /></svg>
                    屏幕捕获
                </button>
                <div className="pl-[6px] text-[#111]">
                    <p className="h-10 text-[26px] leading-10">00:00:00</p>
                    <p className="pt-[3px] text-sm leading-5 text-[#333]">0bytes / 16.4GB</p>
                </div>
            </div>
        </div>
    </section>;
}

function StatusBar() {
    const tool = "flex h-6 items-center justify-center gap-1 border";

    return <footer className="flex h-[29px] shrink-0 items-center overflow-hidden bg-[#dfdde1] whitespace-nowrap text-[#444]">
        <span className="w-[231px] shrink-0 pl-px">X = -4743.17 Y = 5798.73</span>
        <span className="w-[74px] shrink-0">层高 : 4.8</span>
        <span className="w-[97px] shrink-0">底标高 : 36.7</span>
        <span className="w-[97px] shrink-0">0</span>
        <div className="flex shrink-0 gap-[3px]">
            <button aria-label="ortho" className={`${tool} w-[23px] border-[#5aa6f0] bg-white`}><svg viewBox="0 0 14 14" className="size-[14px]" fill="none" stroke="#456"><path d="M2 1v11h11M2 8h4v4" /></svg></button>
            <button aria-label="snap" className={`${tool} w-[33px] border-[#5aa6f0] bg-white`}><svg viewBox="0 0 14 14" className="size-[14px]" fill="none" stroke={B}><path d="M2 2h11v11H2z" /><path d="M0 0h5v5H0z" fill={O} stroke="none" /></svg><Caret /></button>
            <button aria-label="input" className={`${tool} w-[33px] border-[#bcbabe] bg-[#cfcdd1]`}><svg viewBox="0 0 14 14" className="size-[14px]" stroke="#333"><path d="M0 4h6M3 1v6" /><path d="M6 8h8v4H6z" fill="#333" /></svg><Caret /></button>
            <button aria-label="cross" className={`${tool} w-[24px] border-[#c8c6ca] bg-[#d6d4d8] text-[#888]`}><X size={15} strokeWidth={1} /></button>
            <button aria-label="angle" className={`${tool} w-[33px] border-[#bcbabe] bg-[#d3d1d5]`}><svg viewBox="0 0 14 14" className="size-[14px]" stroke="#444"><path d="M1 12h13M1 12l9-10" /><circle cx="6" cy="7" r="1.500" fill="#444" /></svg><Caret /></button>
            <button className={`${tool} w-[68px] border-[#bcbabe] bg-[#d3d1d5]`}>跨类型选择</button>
            <button className={`${tool} w-[57px] border-[#bcbabe] bg-[#d3d1d5]`}>折线选择</button>
        </div>
        <span className="w-[115px] shrink-0 pl-[6px]">CAD图亮度 : 85%</span>
        <button aria-label="darker" className="flex size-[11px] shrink-0 items-center justify-center rounded-full border border-[#999] bg-white"><Minus size={7} /></button>
        <input type="range" defaultValue={85} aria-label="CAD图亮度" className="mx-1 h-5 w-[41px] shrink-0 appearance-none bg-[linear-gradient(#f6f6f6,#f6f6f6)] bg-[length:100%_2px] bg-center bg-no-repeat [&::-webkit-slider-thumb]:h-5 [&::-webkit-slider-thumb]:w-[10px] [&::-webkit-slider-thumb]:appearance-none [&::-webkit-slider-thumb]:rounded-[2px] [&::-webkit-slider-thumb]:border [&::-webkit-slider-thumb]:border-[#777] [&::-webkit-slider-thumb]:bg-[#e9e9ea]" />
        <button aria-label="brighter" className="flex size-[11px] shrink-0 items-center justify-center rounded-full border border-[#999] bg-white text-[9px] leading-none">+</button>
        <span className="pl-2">按鼠标左键指定第一个角点，或拾取构件图元55.35...K/s</span>
    </footer>;
}

const apps: ReactNode[] = [
    <><path d="M3 5h26v24H3z" fill="#f4d98a" stroke="#b9963c" /><path d="M5 3h6v3H5zM13 4h6v3h-6zM22 3h5v4h-5z" fill="#7fae5a" /><path d="M3 10h26v6H3z" fill="#fbeebc" /><path d="M9 30V18h14v12h-4v-7h-6v7z" fill="#7cc0ec" stroke="#4a92c6" /></>,
    <><path d="M5 2h21l3 3v25H5z" fill="#eef5ea" stroke="#7ea573" /><path d="M3 4h17v20H3z" fill="#2f8043" /><path d="M7 8l9 12M16 8L7 20" stroke="#fff" strokeWidth="3" /><path d="M21 16h7M21 20h7M21 24h7M10 27h18M24 13v16" stroke="#3c9252" /></>,
    <><path d="M2 2h28v28H2z" fill="#1765b5" /><path d="M2 2h28v5H2zM2 26h28v4H2z" fill="#2e82d6" /><path d="M10 12H5v10h5M12 22l3-11h2l3 11M13 18h6M22 11h3l3 3v5l-3 3h-3z" stroke="#fff" strokeWidth="2" fill="none" /></>,
    <><path d="M4 5h24v22H4z" fill="#fbf6f1" /><circle cx="13" cy="18" r="5" fill="#e0582c" /><path d="M15 8h3v8h-3zM21 10h4v13h-4z" fill="#ea7f50" /></>,
    <><path d="M8 1h22l-5 29H2z" fill="#e9702b" /><path d="M8 1h22l-2 10L5 20z" fill="#f59345" /><path d="M8 23l-2-8 4-1q3 3-1 5M14 20l-2-8q6-1 6 2t-4 6M22 18l-3-9 6-1M21 13l4-1" stroke="#fff" strokeWidth="2" fill="none" /></>,
    <><rect x="2" y="3" width="28" height="27" rx="2" fill="#f0a222" /><path d="M5 6h18l-2 20H5z" fill="#fffbe8" /><path d="M8 11h10M8 15h9M8 19h7" stroke="#c99" /><path d="M13 21L27 4l4 3-14 17-5 2z" fill="#e9b23a" stroke="#9a6a17" /></>,
    <><path d="M10 2h18v26H10z" fill="#fff" stroke="#c86a4a" /><path d="M3 5l20 2v21L3 25z" fill="#d8431f" /><path d="M7 20V11l5 1v4H7M21 12q-6-1-6 4t6 4v-4h-3" stroke="#fff" strokeWidth="2" fill="none" /></>,
    <><path d="M3 5h26v22H3z" fill="#8fd0f4" stroke="#2f6fa6" strokeWidth="2" /><path d="M3 18q10-6 26 0v9H3z" fill="#4f9a63" /><path d="M3 19q13-3 26 3v5H3z" fill="#1f62a3" /><ellipse cx="19" cy="11" rx="7" ry="3" fill="#fff" /><path d="M1 3h6v4H1zM25 3h6v4h-6zM1 25h6v4H1zM25 25h6v4h-6z" fill="#3c7fb8" /></>,
    <><rect x="0" y="0" width="32" height="32" rx="5" fill="#1f58c6" /><path d="M2 2h28v13H2z" fill="#3a7de4" /><path d="M8 26L14 6h4l6 20M11 19h10" stroke="#fff" strokeWidth="3" fill="none" /></>,
];

const tray: ReactNode[] = [
    <><path d="M4 2h9v13H4z" fill="#3fa23c" stroke="#1f5f1e" /><path d="M6 0h5v3H6z" fill="#ddd" /><path d="M8 5v7M6 8l2 2 3-3" stroke="#fff" /></>,
    <><circle cx="8" cy="8" r="7" fill="#fff" /><circle cx="8" cy="8" r="5.500" stroke="#d8262a" strokeWidth="2" /><circle cx="8" cy="8" r="3" fill="#d8262a" /></>,
    <><circle cx="8" cy="9" r="6" fill="#2c8fd8" /><path d="M5 1v5M11 1v5" stroke="#1d5f97" strokeWidth="2" /><path d="M5 9h6M8 6v7" stroke="#cfe9ff" /></>,
    <path d="M13 4Q8 0 4 4t4 5 4 3-9 1" stroke="#1f8fe0" strokeWidth="3" />,
    <><path d="M2 2h5v9H2z" fill="#8a929c" /><circle cx="10" cy="10" r="5" fill="#34a34a" /><path d="M7 10l2 2 4-4" stroke="#fff" strokeWidth="2" /></>,
    <><path d="M6 1l7 2-8 11-4-3z" fill="#43a05a" /><circle cx="10" cy="5" r="4" fill="#e85c2a" /><path d="M2 14l4-3 8 3" stroke="#efc23c" strokeWidth="3" /></>,
    <><path d="M2 1q8 2 10 9l2 4-7-2-6 3 2-6z" fill="#111" /><circle cx="7" cy="7" r="2" fill="#eee" /></>,
    <><path d="M8 0l6 2v6q0 5-6 8-6-3-6-8V2z" fill="#4fae48" stroke="#e6f3e2" /><path d="M9 3L5 9h3l-1 4 4-6H8z" fill="#fff" /></>,
    <><circle cx="8" cy="8" r="7" fill="#f4d21f" /><path d="M8 4v8M4 8h8" stroke="#2a8f3a" strokeWidth="3" /></>,
    <><path d="M8 1h6v8l-6 6-6-6V1z" fill="#2f7ee0" stroke="#fff" /><path d="M5 6l3 3 3-3" stroke="#fff" strokeWidth="2" /></>,
    <><path d="M3 3h6v11H3z" fill="#e8ecf0" stroke="#555" /><path d="M11 1v5M14 1v5M10 6h5v4h-5zM12 10v4H9" stroke="#fff" /></>,
    <><path d="M3 6h3l4-4v12l-4-4H3z" fill="#fff" /><path d="M12 5q2 3 0 6" stroke="#fff" /></>,
    <><path d="M5 15V10h2v5zM8 15V7h2v8zM11 15V4h2v11zM14 15V1h2v14z" fill="#e4b13a" /><path d="M1 15v-4h4v4z" fill="#c8622a" /></>,
];

function Taskbar() {
    return <footer className="flex h-[38px] shrink-0 items-center border-t border-[#67788f] bg-gradient-to-b from-[#8b9cb2] to-[#7a8ea8] text-white">
        <button aria-label="start" className="ml-2 shrink-0">
            <svg viewBox="0 0 34 34" className="size-[34px]"><circle cx="17" cy="17" r="16" fill="#2b6a9c" stroke="#9cc0d8" /><path d="M2 14a15 15 0 0130 0Q17 20 2 14z" fill="#6ba3c6" /><path d="M9 10q4-2 7 0v6q-3-2-7 0z" fill="#ee6a2c" /><path d="M18 10q4 2 8 0v6q-4 2-8 0z" fill="#8cc43f" /><path d="M8 18q4-2 7 0v7q-3-2-7 0z" fill="#3fa2e6" /><path d="M17 18q4 2 8 0v6q-4 2-8 0z" fill="#fbd02e" /></svg>
        </button>
        <svg viewBox="0 0 30 30" className="ml-[22px] size-[30px] shrink-0"><path d="M3 3q10-3 11 10Q4 16 2 11z" fill="#8ccc38" /><circle cx="21" cy="8" r="7" fill="#2f86e0" /><circle cx="8" cy="21" r="7" fill="#f4c51e" /><circle cx="22" cy="22" r="7" fill="#e2433a" /></svg>
        <label className="ml-[13px] flex h-[31px] w-[135px] shrink-0 items-center gap-[3px] bg-[#eceff4] pl-[2px]">
            <svg viewBox="0 0 16 16" className="size-[18px] shrink-0" fill="none"><path d="M3 9h10a5 5 0 10-1 3" stroke="#1e86e0" strokeWidth="3" /><path d="M1 14Q0 10 7 4t8-1" stroke="#58b4f0" /></svg>
            <input defaultValue="军服工厂改产防护服" aria-label="搜索" className="w-full min-w-0 text-[#222] outline-none" />
        </label>
        <button className="h-[31px] w-[53px] shrink-0 bg-[#2382f5]">搜索一下</button>
        <div className="flex shrink-0 gap-[3px] pl-[5px]">
            {apps.map((a, i) => <button key={i} aria-label={`app ${i + 1}`} className={`flex h-9 items-center justify-center rounded-sm border border-[#5a6d88] shadow-[inset_0_0_1px_white] ${i === 0 ? "mr-[7px] w-[44px] bg-[#a4b3c6]" : i === 3 ? "w-[51px] bg-[#dfe5ec]" : "w-[51px] bg-[#a9b9cc]"}`}>
                <svg viewBox="0 0 32 32" className="size-[30px]">{a}</svg>
            </button>)}
        </div>
        <div className="flex min-w-0 flex-1 items-center justify-between pl-[10px]">
            <svg viewBox="0 0 14 10" className="h-[10px] w-[14px]"><path d="M0 0h14v10H0z" fill="#e3e3e3" /><path d="M1 3h12M1 5h12M1 7h12" stroke="#888" strokeDasharray="1 1" /></svg>
            <span className="flex size-[14px] items-center justify-center rounded-full bg-[#1a2f9c] text-[10px] font-bold">?</span>
            <span className="flex flex-col items-center gap-1 pr-2"><svg viewBox="0 0 12 12" className="size-2" fill="none" stroke="#fff" strokeWidth="2"><path d="M4 3V1h7v6H9M1 4h7v6H1z" /></svg><Caret className="text-white" /></span>
            {tray.map((t, i) => <svg key={i} viewBox="0 0 16 16" className="size-[15px]" fill="none">{t}</svg>)}
        </div>
        <time className="w-[86px] shrink-0 text-center leading-4">10:37<br />2020/2/21</time>
        <svg viewBox="0 0 18 18" className="mr-[17px] ml-[1px] size-[18px] shrink-0" fill="none"><path d="M5 1h12v16H2V4h3z" stroke="#fff" fill="#dfe6ee" /><path d="M8 4h3v3H8zM13 5h2M8 9h7M8 12h7" stroke="#445" /></svg>
    </footer>;
}

function NetWidget() {
    return <>
        <div className="absolute top-[587px] right-0 h-[42px] w-3 overflow-hidden">
            <div className="flex size-[42px] items-center rounded-full border-2 border-[#b9dfc0] bg-[#3fb85a] pl-[2px] font-bold text-white">5</div>
        </div>
        <div className="absolute right-0 bottom-[42px] flex h-14 w-[111px] items-center justify-end">
            <div className="absolute top-2 left-0 flex h-10 w-[74px] items-center rounded-l-2xl bg-[#222431] pl-4 text-[#8a8c98]">
                <Wifi size={26} />
                <Ban size={13} className="mt-3 -ml-[10px] text-[#d81b60]" strokeWidth={3} />
            </div>
            <div className="relative flex size-14 items-center justify-center rounded-full bg-[#2a2c38] text-[#c6c8d0]">
                <svg viewBox="0 0 56 56" className="absolute size-14" fill="none"><path d="M28 3a25 25 0 010 50" stroke="#57b88c" strokeWidth="2" /></svg>
                <span className="text-[22px] font-light">51</span><span className="mt-2 text-[10px]">%</span>
            </div>
        </div>
    </>;
}

export default function App() {
    return <div className={`relative flex h-screen flex-col overflow-hidden bg-white text-[11px] leading-4 ${FONT}`}>
        <TitleBar />
        <Ribbon />
        <ContextBar />
        <div className="flex min-h-0 flex-1">
            <Navigator />
            <ComponentPanel />
            <Drawing />
        </div>
        <StatusBar />
        <Taskbar />
        <IdentifyDialog />
        <Recorder />
        <NetWidget />
    </div>;
}
